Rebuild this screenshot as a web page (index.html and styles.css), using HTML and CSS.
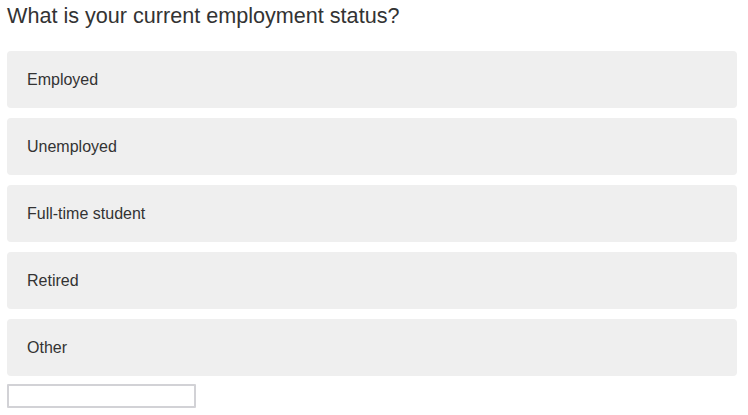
FILE: index.html
```html
<!DOCTYPE html>
<html>
<head>
<meta charset="utf-8">
<link rel="stylesheet" href="styles.css">
</head>
<body>
<div class="question">
  <h1 class="title">What is your current employment status?</h1>
  <div class="options">
    <div class="option">Employed</div>
    <div class="option">Unemployed</div>
    <div class="option">Full-time student</div>
    <div class="option">Retired</div>
    <div class="option">Other</div>
  </div>
  <input class="other-input" type="text">
</div>
</body>
</html>
```
FILE: styles.css
```css
html, body {
  margin: 0;
  padding: 0;
  background: #fff;
}
body {
  font-family: "Liberation Sans", Arial, sans-serif;
  color: #333;
}
.question {
  padding: 3px 0 0 7px;
  width: 730px;
  display: flex;
  flex-direction: column;
}
.title {
  margin: 0;
  font-size: 21.6px;
  font-weight: normal;
  line-height: 26px;
  color: #333;
}
.options {
  margin-top: 22px;
  display: flex;
  flex-direction: column;
  gap: 10px;
}
.option {
  background: #efefef;
  border-radius: 4px;
  padding: 19px 20px;
  font-size: 16px;
  line-height: 19px;
  color: #333;
}
.other-input {
  margin: 8px 0 0 0;
  width: 189px;
  height: 24px;
  box-sizing: border-box;
  border: 2px solid #d2d2d6;
  border-radius: 1px;
  padding: 0 4px;
  background: #fff;
  font-family: "Liberation Sans", Arial, sans-serif;
  font-size: 13px;
}
```
